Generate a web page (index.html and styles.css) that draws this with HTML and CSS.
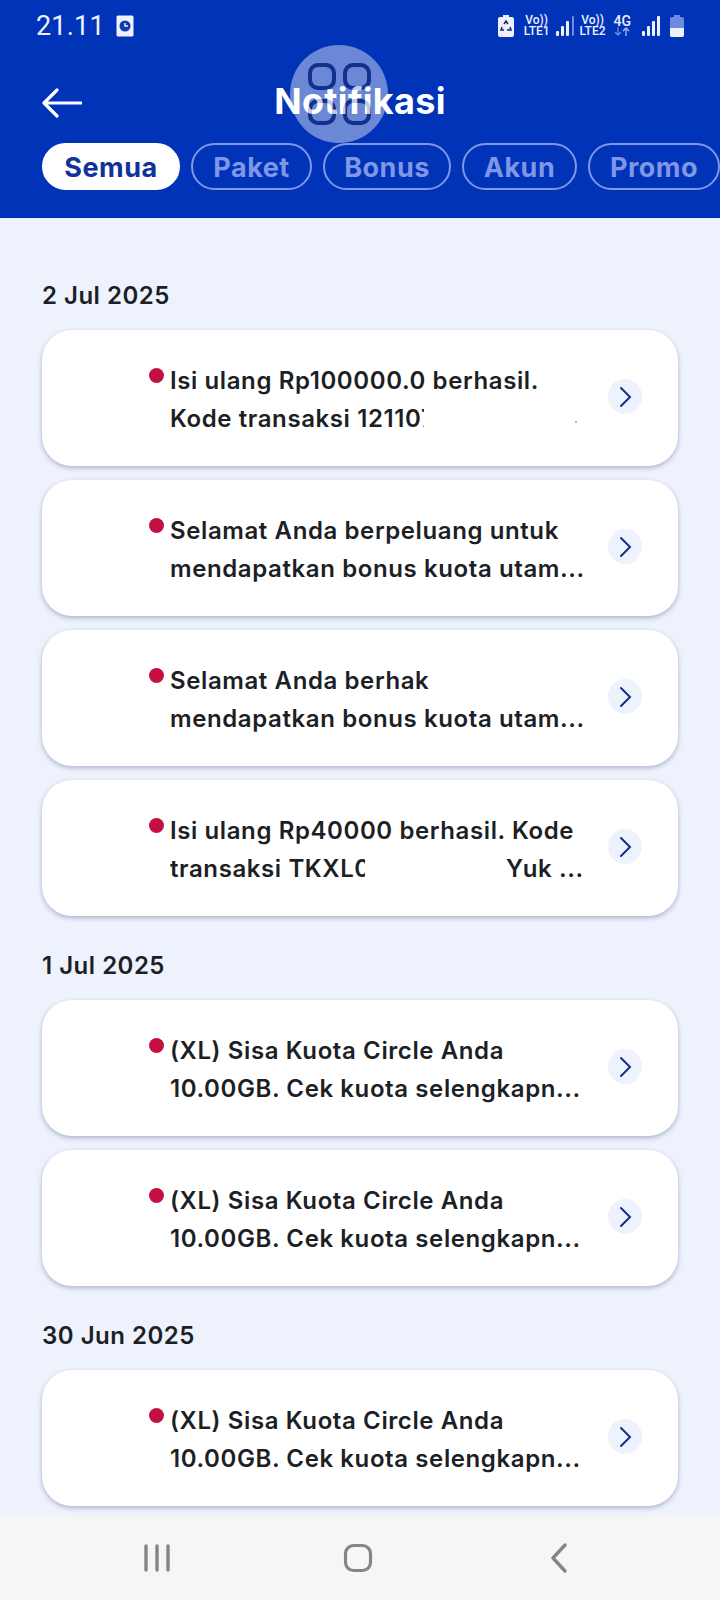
FILE: index.html
```html
<!DOCTYPE html>
<html>
<head>
    <meta charset="UTF-8" />
    <title>Notifikasi</title>
    <link rel="stylesheet" href="styles.css">
</head>

<body>
<header class="app-header">
    <div class="status-bar">
        <span class="status-time">21.11</span>
        <svg class="status-alarm" width="18" height="22" viewBox="0 0 18 22">
            <rect x="0.5" y="0.5" width="17" height="21" rx="1.5" fill="#eef1fb"/>
            <circle cx="9" cy="11" r="5.5" fill="#0f3bb0"/>
            <path d="M9 8v3h3" fill="none" stroke="#eef1fb" stroke-width="1.4"/>
        </svg>
        <div class="status-icons">
            <svg class="saver" width="16" height="22" viewBox="0 0 16 22">
                <path d="M5 0h6v2h3a2 2 0 0 1 2 2v16a2 2 0 0 1-2 2H2a2 2 0 0 1-2-2V4a2 2 0 0 1 2-2h3z" fill="#eef1fb"/>
                <path d="M6 9l2-3 2 3M12 12l1 3h-4M4 12l-1 3h3" fill="none" stroke="#10296f" stroke-width="1.5"/>
            </svg>
            <div class="net"><span>Vo))</span><span>LTE1</span></div>
            <svg width="18" height="20" viewBox="0 0 18 20">
                <rect x="0" y="15" width="3" height="5" rx="1" fill="#eef1fb"/>
                <rect x="5" y="10" width="3" height="10" rx="1" fill="#eef1fb"/>
                <rect x="10" y="5" width="3" height="15" rx="1" fill="#eef1fb"/>
                <rect x="16" y="0" width="2" height="20" rx="1" fill="#6f8be0"/>
            </svg>
            <div class="net"><span>Vo))</span><span>LTE2</span></div>
            <div class="net net-data">
                <span>4G</span>
                <svg width="16" height="9" viewBox="0 0 16 9">
                    <path d="M4 0v8M1 5l3 3 3-3" fill="none" stroke="#6f8be0" stroke-width="1.3"/>
                    <path d="M12 9V1M9 4l3-3 3 3" fill="none" stroke="#a9baf0" stroke-width="1.3"/>
                </svg>
            </div>
            <svg class="bars-full" width="18" height="20" viewBox="0 0 18 20">
                <rect x="0" y="15" width="3" height="5" rx="1" fill="#eef1fb"/>
                <rect x="5" y="10" width="3" height="10" rx="1" fill="#eef1fb"/>
                <rect x="10" y="5" width="3" height="15" rx="1" fill="#eef1fb"/>
                <rect x="15" y="0" width="3" height="20" rx="1" fill="#eef1fb"/>
            </svg>
            <svg class="battery" width="14" height="22" viewBox="0 0 14 22">
                <path d="M4 0h6v2h2a2 2 0 0 1 2 2v16a2 2 0 0 1-2 2H2a2 2 0 0 1-2-2V4a2 2 0 0 1 2-2h2z" fill="#6f8be0"/>
                <path d="M0 13h14v7a2 2 0 0 1-2 2H2a2 2 0 0 1-2-2z" fill="#eef1fb"/>
            </svg>
        </div>
    </div>

    <div class="nav-row">
        <svg class="back-arrow" width="40" height="30" viewBox="0 0 40 30">
            <path d="M39 15H3M15 2L2 15l13 13" fill="none" stroke="#fff" stroke-width="3.2" stroke-linecap="round" stroke-linejoin="round"/>
        </svg>
        <h1 class="page-title">Notifikasi</h1>
    </div>

    <div class="tabs">
        <span class="tab active">Semua</span>
        <span class="tab">Paket</span>
        <span class="tab">Bonus</span>
        <span class="tab">Akun</span>
        <span class="tab">Promo</span>
    </div>

    <!-- floating assistant button: the disc goes under the title, a faint copy of the squares over it -->
    <div class="float-button">
        <svg width="98" height="98" viewBox="0 0 98 98">
            <g fill="none" stroke="#12308c" stroke-width="4">
                <rect x="20" y="20" width="24" height="23" rx="8"/>
                <rect x="55" y="20" width="24" height="23" rx="8"/>
                <rect x="20" y="56" width="24" height="22" rx="8"/>
                <rect x="55" y="56" width="24" height="22" rx="8"/>
            </g>
        </svg>
    </div>
    <div class="float-button-top">
        <svg width="98" height="98" viewBox="0 0 98 98">
            <g fill="none" stroke="#12308c" stroke-width="4">
                <rect x="20" y="20" width="24" height="23" rx="8"/>
                <rect x="55" y="20" width="24" height="23" rx="8"/>
                <rect x="20" y="56" width="24" height="22" rx="8"/>
                <rect x="55" y="56" width="24" height="22" rx="8"/>
            </g>
        </svg>
    </div>
</header>

<main class="content">
    <section class="day">
        <div class="day-label">2 Jul 2025</div>
        <div class="notif-card">
            <span class="dot"></span>
            <div class="notif-text">
                <div class="line">Isi ulang Rp100000.0 berhasil.</div>
                <div class="line"><span class="mask mask-kode">Kode transaksi 121107</span><span class="speck">.</span></div>
            </div>
            <span class="chevron"><svg width="14" height="22" viewBox="0 0 14 22"><path d="M3 2l9 9-9 9" fill="none" stroke="#12308c" stroke-width="2" stroke-linecap="round"/></svg></span>
        </div>
        <div class="notif-card">
            <span class="dot"></span>
            <div class="notif-text">
                <div class="line">Selamat Anda berpeluang untuk</div>
                <div class="line">mendapatkan bonus kuota utam...</div>
            </div>
            <span class="chevron"><svg width="14" height="22" viewBox="0 0 14 22"><path d="M3 2l9 9-9 9" fill="none" stroke="#12308c" stroke-width="2" stroke-linecap="round"/></svg></span>
        </div>
        <div class="notif-card">
            <span class="dot"></span>
            <div class="notif-text">
                <div class="line">Selamat Anda berhak</div>
                <div class="line">mendapatkan bonus kuota utam...</div>
            </div>
            <span class="chevron"><svg width="14" height="22" viewBox="0 0 14 22"><path d="M3 2l9 9-9 9" fill="none" stroke="#12308c" stroke-width="2" stroke-linecap="round"/></svg></span>
        </div>
        <div class="notif-card">
            <span class="dot"></span>
            <div class="notif-text">
                <div class="line">Isi ulang Rp40000 berhasil. Kode</div>
                <div class="line"><span class="mask mask-trx">transaksi TKXL0</span><span class="tail">Yuk ...</span></div>
            </div>
            <span class="chevron"><svg width="14" height="22" viewBox="0 0 14 22"><path d="M3 2l9 9-9 9" fill="none" stroke="#12308c" stroke-width="2" stroke-linecap="round"/></svg></span>
        </div>
    </section>

    <section class="day">
        <div class="day-label">1 Jul 2025</div>
        <div class="notif-card">
            <span class="dot"></span>
            <div class="notif-text">
                <div class="line">(XL) Sisa Kuota Circle Anda</div>
                <div class="line">10.00GB. Cek kuota selengkapn...</div>
            </div>
            <span class="chevron"><svg width="14" height="22" viewBox="0 0 14 22"><path d="M3 2l9 9-9 9" fill="none" stroke="#12308c" stroke-width="2" stroke-linecap="round"/></svg></span>
        </div>
        <div class="notif-card">
            <span class="dot"></span>
            <div class="notif-text">
                <div class="line">(XL) Sisa Kuota Circle Anda</div>
                <div class="line">10.00GB. Cek kuota selengkapn...</div>
            </div>
            <span class="chevron"><svg width="14" height="22" viewBox="0 0 14 22"><path d="M3 2l9 9-9 9" fill="none" stroke="#12308c" stroke-width="2" stroke-linecap="round"/></svg></span>
        </div>
    </section>

    <section class="day">
        <div class="day-label">30 Jun 2025</div>
        <div class="notif-card">
            <span class="dot"></span>
            <div class="notif-text">
                <div class="line">(XL) Sisa Kuota Circle Anda</div>
                <div class="line">10.00GB. Cek kuota selengkapn...</div>
            </div>
            <span class="chevron"><svg width="14" height="22" viewBox="0 0 14 22"><path d="M3 2l9 9-9 9" fill="none" stroke="#12308c" stroke-width="2" stroke-linecap="round"/></svg></span>
        </div>
    </section>
</main>

<footer class="system-nav">
    <svg width="26" height="28" viewBox="0 0 26 28">
        <path d="M2 2v24M13 2v24M24 2v24" fill="none" stroke="#858585" stroke-width="3.4" stroke-linecap="round"/>
    </svg>
    <svg width="30" height="30" viewBox="0 0 30 30">
        <rect x="2.5" y="2.5" width="25" height="25" rx="8" fill="none" stroke="#858585" stroke-width="3.2"/>
    </svg>
    <svg width="18" height="30" viewBox="0 0 18 30">
        <path d="M15 2L3 15l12 13" fill="none" stroke="#858585" stroke-width="3.4" stroke-linecap="round" stroke-linejoin="round"/>
    </svg>
</footer>
</body>
</html>
```

FILE: styles.css
```css
* {
    margin: 0;
    padding: 0;
    box-sizing: border-box;
}

:root {
    --header-bg: #0033b8;
    --page-bg: #eef2fc;
    --text-color: #1c1f26;
    --dot-color: #c40f42;
    --tab-muted: #7f97e6;
    --status-color: #eef1fb;
}

body {
    width: 720px;
    height: 1600px;
    display: flex;
    flex-direction: column;
    overflow: hidden;
    background-color: var(--page-bg);
    color: var(--text-color);
    font-family: "Inter", "Liberation Sans", sans-serif;
}

.app-header {
    position: relative;
    height: 218px;
    flex-shrink: 0;
    background-color: var(--header-bg);
}

/* Status bar */
.status-bar {
    display: flex;
    align-items: center;
    height: 52px;
    padding: 0 36px;
    color: var(--status-color);
    font-family: "Roboto", sans-serif;
}

.status-time {
    font-size: 27px;
    letter-spacing: 0.2px;
}

.status-alarm {
    margin-left: 11px;
}

.status-icons {
    display: flex;
    align-items: center;
    gap: 6px;
    margin-left: auto;
}

.net {
    display: flex;
    flex-direction: column;
    align-items: center;
    font-size: 12px;
    font-weight: 500;
    line-height: 11px;
}

.net-data {
    margin-left: 2px;
    font-size: 14px;
}

.saver {
    margin-right: 4px;
}

.bars-full {
    margin-left: 5px;
}

.battery {
    margin-left: 4px;
}

/* Title row */
.nav-row {
    display: grid;
    grid-template-columns: 1fr auto 1fr;
    align-items: center;
    height: 70px;
    margin-top: 16px;
    padding: 0 42px;
}

.page-title {
    position: relative;
    z-index: 2;
    margin-top: -4px;
    color: #fff;
    font-size: 36px;
    font-weight: 700;
    letter-spacing: 0.3px;
}

/* Tabs */
.tabs {
    display: grid;
    grid-template-columns: 138px 121px 128px 115px 132px;
    gap: 11px;
    margin-top: 5px;
    padding-left: 42px;
}

.tab {
    height: 47px;
    border: 2px solid var(--tab-muted);
    border-radius: 24px;
    color: var(--tab-muted);
    font-size: 27px;
    font-weight: 700;
    letter-spacing: 0.5px;
    line-height: 45px;
    text-align: center;
}

.tab.active {
    background-color: #fff;
    border-color: #fff;
    color: #10329a;
}

.float-button,
.float-button-top {
    position: absolute;
    top: 45px;
    left: 290px;
    width: 98px;
    height: 98px;
}

.float-button {
    z-index: 1;
    border-radius: 50%;
    background-color: rgba(255, 255, 255, 0.42);
}

.float-button-top {
    z-index: 3;
    opacity: 0.25;
}

/* Notification list */
.content {
    flex: 1;
    overflow: hidden;
    padding: 62px 42px 0;
}

.day {
    margin-bottom: 34px;
}

.day-label {
    height: 30px;
    margin-bottom: 20px;
    font-size: 24px;
    font-weight: 600;
    letter-spacing: 0.5px;
    line-height: 32px;
}

.notif-card {
    display: flex;
    align-items: center;
    height: 136px;
    margin-bottom: 14px;
    padding-left: 107px;
    background-color: #fff;
    border-radius: 30px;
    box-shadow: 0 2px 5px rgba(30, 50, 110, 0.32);
}

.notif-card:last-child {
    margin-bottom: 0;
}

.dot {
    align-self: flex-start;
    flex-shrink: 0;
    width: 15px;
    height: 15px;
    margin-top: 38px;
    border-radius: 50%;
    background-color: var(--dot-color);
}

.notif-text {
    width: 438px;
    margin-top: 3px;
    margin-left: 6px;
    font-size: 24px;
    font-weight: 600;
    letter-spacing: 0.6px;
    line-height: 38px;
}

.line {
    display: flex;
    white-space: nowrap;
}

.mask {
    overflow: hidden;
}

.mask-kode {
    width: 254px;
}

.mask-trx {
    width: 195px;
}

.tail {
    margin-left: 141px;
}

.speck {
    margin-left: 150px;
    color: #8a8f99;
    font-size: 12px;
}

.chevron {
    display: flex;
    align-items: center;
    justify-content: center;
    flex-shrink: 0;
    width: 34px;
    height: 35px;
    margin-top: -3px;
    border-radius: 50%;
    background-color: var(--page-bg);
}

/* Android nav bar */
.system-nav {
    display: grid;
    grid-template-columns: repeat(3, 201px);
    align-items: center;
    justify-items: center;
    flex-shrink: 0;
    height: 84px;
    padding-left: 56px;
    background-color: #f6f6f6;
}
```
